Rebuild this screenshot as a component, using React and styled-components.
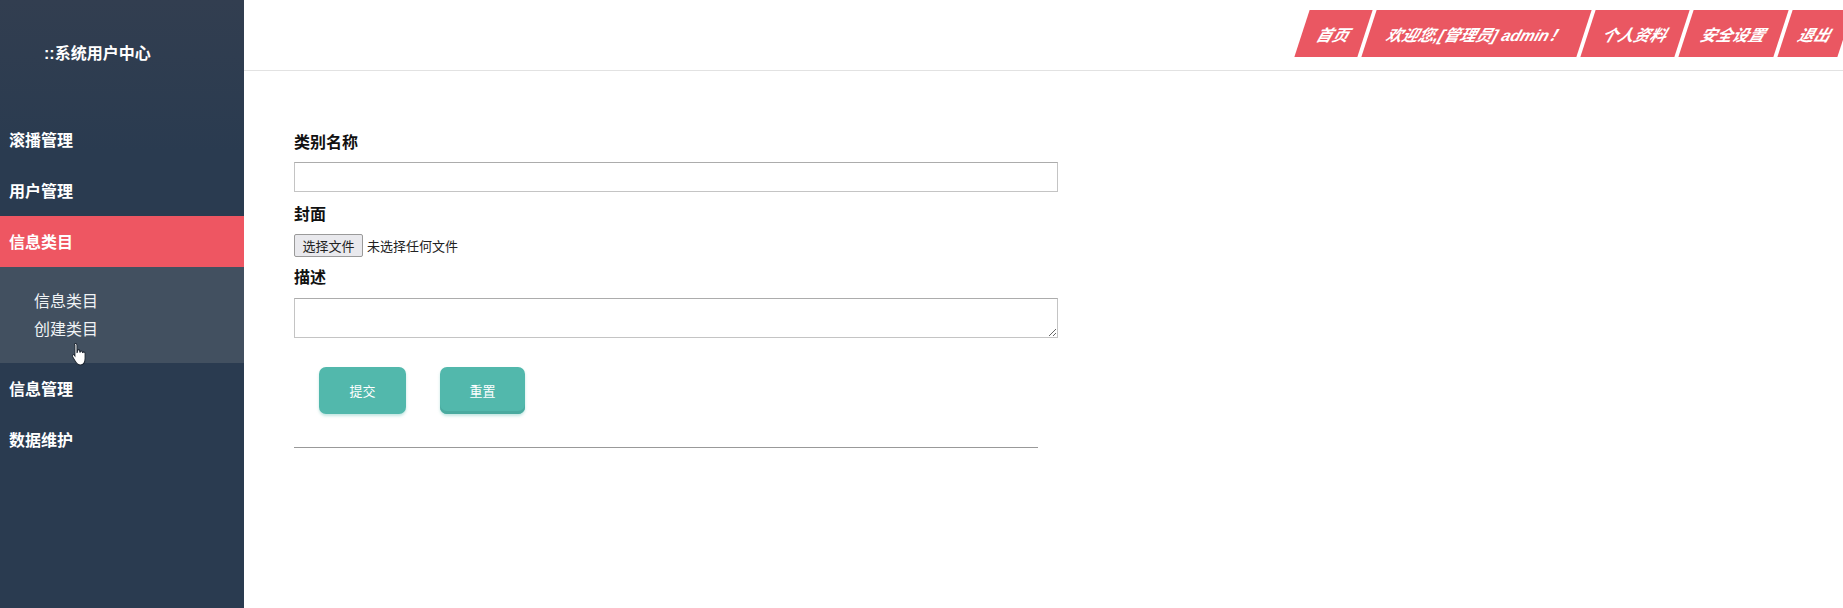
import React from 'react';
import styled, { createGlobalStyle } from 'styled-components';

const GlobalStyle = createGlobalStyle`
  html, body {
    margin: 0;
    padding: 0;
    height: 100%;
    background: #fff;
    overflow: hidden;
  }
  body {
    font-family: "Liberation Sans", "Noto Sans CJK SC", sans-serif;
    color: #111;
  }
`;

const Page = styled.div`
  display: flex;
  height: 608px;
`;

const Sidebar = styled.aside`
  position: relative;
  width: 244px;
  flex-shrink: 0;
  background: linear-gradient(180deg, #323e50 0%, #2a3b50 25%, #2a3b50 100%);
`;

const Brand = styled.div`
  height: 114px;
  padding: 43px 0 0 44px;
  box-sizing: border-box;
  font-size: 16px;
  line-height: 22px;
  font-weight: 700;
  color: #fff;
`;

const MenuItem = styled.div`
  height: 51px;
  padding-left: 9px;
  font-size: 16px;
  line-height: 53px;
  font-weight: 700;
  color: #fff;
  background: ${(p) => (p.$active ? '#ee5662' : 'transparent')};
`;

const SubMenu = styled.div`
  height: 96px;
  padding: 21px 0 0 34px;
  box-sizing: border-box;
  background: #425060;
`;

const SubItem = styled.div`
  height: 28px;
  font-size: 16px;
  line-height: 28px;
  color: #f0f3f5;
`;

const Cursor = styled.svg`
  position: absolute;
  left: 71px;
  top: 342px;
`;

const Main = styled.main`
  flex: 1;
  min-width: 0;
`;

const Header = styled.header`
  height: 71px;
  box-sizing: border-box;
  border-bottom: 1px solid #e2e2e2;
  padding-top: 10px;
  display: flex;
  justify-content: flex-end;
  gap: 4px;
  overflow: hidden;
`;

const NavItem = styled.a`
  height: 47px;
  width: ${(p) => p.$w}px;
  flex-shrink: 0;
  display: flex;
  align-items: center;
  justify-content: center;
  transform: skewX(-18deg);
  background: #ea5762;
  color: #fff;
  font-size: 16px;
  font-weight: 700;
  font-style: italic;
  white-space: nowrap;

  &:last-child {
    margin-right: -2px;
  }
`;

const Form = styled.div`
  width: 764px;
  padding: 61px 0 0 50px;
`;

const Label = styled.div`
  height: 22px;
  margin-bottom: ${(p) => p.$mb}px;
  font-size: 16px;
  line-height: 22px;
  font-weight: 700;
  color: #111;
`;

const TextInput = styled.input`
  display: block;
  width: 100%;
  height: 30px;
  box-sizing: border-box;
  margin-bottom: 12px;
  border: 1px solid #c4c4c4;
  border-top-color: #acacac;
  background: #fff;
  outline: none;
`;

const FileRow = styled.div`
  display: flex;
  align-items: center;
  height: 22px;
  margin-bottom: 11px;
  font-size: 13px;
  color: #222;
`;

const FileButton = styled.button`
  width: 69px;
  height: 23px;
  padding: 0;
  margin-right: 4px;
  border: 1px solid #9a9a9a;
  border-radius: 2px;
  background: #e9e9ed;
  font: inherit;
  color: #222;
`;

const TextArea = styled.textarea`
  display: block;
  width: 100%;
  height: 40px;
  box-sizing: border-box;
  margin: 0;
  border: 1px solid #c4c4c4;
  border-top-color: #acacac;
  background: #fff;
  outline: none;
`;

const Actions = styled.div`
  display: flex;
  gap: 34px;
  padding: 29px 0 0 25px;
`;

const SubmitButton = styled.button`
  width: ${(p) => p.$w}px;
  height: 47px;
  padding: 0;
  border: none;
  border-radius: 7px;
  background: #52b8ac;
  box-shadow: ${(p) => (p.$hover ? 'inset 0 -3px 0 #4aaa9f, ' : '')}0 2px 3px rgba(82, 184, 172, 0.35);
  color: #fff;
  font-family: inherit;
  font-size: 13px;
`;

const Rule = styled.hr`
  width: 744px;
  height: 1px;
  margin: 33px 0 0;
  border: none;
  background: #999;
`;

const menuTop = ['滚播管理', '用户管理'];
const menuBottom = ['信息管理', '数据维护'];

export default function App() {
  return (
    <Page>
      <GlobalStyle />
      <Sidebar>
        <Brand>::系统用户中心</Brand>
        {menuTop.map((m) => (
          <MenuItem key={m}>{m}</MenuItem>
        ))}
        <MenuItem $active>信息类目</MenuItem>
        <SubMenu>
          <SubItem>信息类目</SubItem>
          <SubItem>创建类目</SubItem>
        </SubMenu>
        {menuBottom.map((m) => (
          <MenuItem key={m}>{m}</MenuItem>
        ))}
        <Cursor width="18" height="25" viewBox="0 0 20 24" preserveAspectRatio="none">
          <path
            d="M5 1.5c1 0 1.6.7 1.6 1.7V10l.6-.2V8.6c0-1.700 2.400-1.700 2.500 0v1l.5.1c.2-1.400 2.400-1.300 2.500.2l.5.2c.4-1 2.400-.8 2.400.8v5c0 3.400-1.800 6.100-5 6.100-3.200 0-4.500-1.200-6-3.800L1.700 14c-.8-1.400 1-2.600 2-1.400l.7.900V3.200C3.400 2.200 4 1.500 5 1.500z"
            fill="#fff"
            stroke="#1c2530"
            strokeWidth="1"
          />
        </Cursor>
      </Sidebar>
      <Main>
        <Header>
          <NavItem $w={63}>首页</NavItem>
          <NavItem $w={215}>欢迎您,[管理员] admin！</NavItem>
          <NavItem $w={94}>个人资料</NavItem>
          <NavItem $w={95}>安全设置</NavItem>
          <NavItem $w={60}>退出</NavItem>
        </Header>
        <Form>
          <Label $mb={8}>类别名称</Label>
          <TextInput type="text" />
          <Label $mb={8}>封面</Label>
          <FileRow>
            <FileButton type="button">选择文件</FileButton>
            未选择任何文件
          </FileRow>
          <Label $mb={9}>描述</Label>
          <TextArea />
          <Actions>
            <SubmitButton $w={87} type="button">提交</SubmitButton>
            <SubmitButton $w={85} $hover type="button">重置</SubmitButton>
          </Actions>
          <Rule />
        </Form>
      </Main>
    </Page>
  );
}
